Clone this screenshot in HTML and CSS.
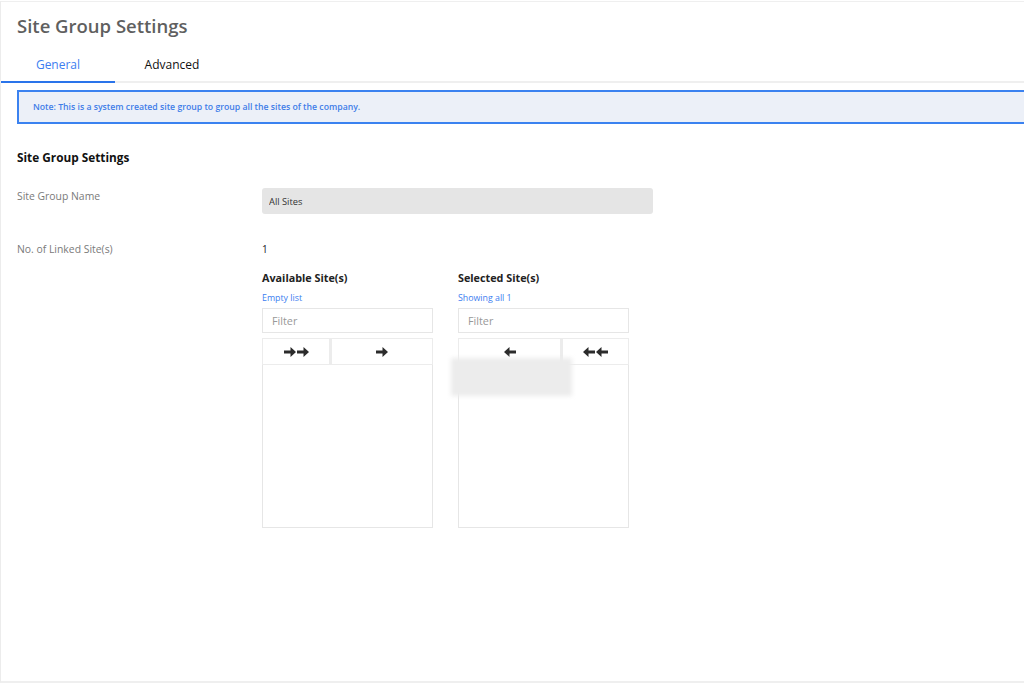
FILE: index.html
```html
<!DOCTYPE html>
<html lang="en">
<head>
    <meta charset="UTF-8">
    <meta name="viewport" content="width=device-width, initial-scale=1.0">
    <title>Site Group Settings</title>
    <link rel="stylesheet" href="styles.css">
</head>
<body>
    <div class="page">
        <h1 class="page-title">Site Group Settings</h1>
        <div class="tabs">
            <div class="tab tab-active">General</div>
            <div class="tab">Advanced</div>
        </div>
        <div class="note">Note: This is a system created site group to group all the sites of the company.</div>

        <h2 class="section-title">Site Group Settings</h2>
        <div class="form-row form-row-name">
            <label class="form-label" for="groupName">Site Group Name</label>
            <input class="form-control" type="text" id="groupName" value="All Sites" readonly>
        </div>
        <div class="form-row form-row-count">
            <span class="form-label">No. of Linked Site(s)</span>
            <div class="form-value">
                <div class="count">1</div>
                <div class="dual-list">
                    <div class="list-col">
                        <div class="list-title">Available Site(s)</div>
                        <div class="list-info">Empty list</div>
                        <input class="filter" type="text" placeholder="Filter">
                        <div class="btn-group">
                            <button class="btn btn-narrow" type="button">
                                <svg width="12" height="10" viewBox="0 0 12 10"><path d="M0 3.5h6.5V0L12 5l-5.5 5V6.5H0z"/></svg>
                                <svg width="12" height="10" viewBox="0 0 12 10"><path d="M0 3.5h6.5V0L12 5l-5.5 5V6.5H0z"/></svg>
                            </button>
                            <button class="btn btn-wide" type="button">
                                <svg width="12" height="10" viewBox="0 0 12 10"><path d="M0 3.5h6.5V0L12 5l-5.5 5V6.5H0z"/></svg>
                            </button>
                        </div>
                        <div class="list-box"></div>
                    </div>
                    <div class="list-col">
                        <div class="list-title">Selected Site(s)</div>
                        <div class="list-info">Showing all 1</div>
                        <input class="filter" type="text" placeholder="Filter">
                        <div class="btn-group">
                            <button class="btn btn-wide" type="button">
                                <svg width="12" height="10" viewBox="0 0 12 10"><path d="M12 3.5H5.5V0L0 5l5.5 5V6.5H12z"/></svg>
                            </button>
                            <button class="btn btn-narrow" type="button">
                                <svg width="12" height="10" viewBox="0 0 12 10"><path d="M12 3.5H5.5V0L0 5l5.5 5V6.5H12z"/></svg>
                                <svg width="12" height="10" viewBox="0 0 12 10"><path d="M12 3.5H5.5V0L0 5l5.5 5V6.5H12z"/></svg>
                            </button>
                        </div>
                        <div class="list-box">
                            <div class="blurred"></div>
                        </div>
                    </div>
                </div>
            </div>
        </div>
    </div>
</body>
</html>
```

FILE: styles.css
```css
html, body {
    margin: 0;
    overflow: hidden;
    background: #fff;
    font-family: "Open Sans", "Noto Sans", sans-serif;
}
.page {
    box-sizing: border-box;
    height: 682px;
    margin-top: 1px;
    border-top: 1px solid #efefef;
    border-left: 1px solid #ececec;
    border-bottom: 2px solid #efefef;
}
.page-title {
    margin: 0;
    padding: 11px 16px 0;
    font-size: 18.5px;
    line-height: 26px;
    font-weight: 600;
    color: #5f5f5f;
}
.tabs {
    display: flex;
    margin-top: 11px;
    border-bottom: 2px solid #efefef;
}
.tab {
    width: 114px;
    text-align: center;
    font-size: 12px;
    line-height: 18px;
    padding: 6px 0 7px;
    color: #111;
}
.tab-active {
    color: #3d7ef0;
    border-bottom: 2px solid #2a74ea;
    margin-bottom: -2px;
}
.note {
    margin: 7px -10px 0 16px;
    padding: 0 14px;
    height: 30px;
    line-height: 30px;
    border: 2px solid #3b82f0;
    background: #ecf0f8;
    color: #3f7de8;
    font-size: 8.7px;
    font-weight: 600;
}
.section-title {
    margin: 24px 0 0 16px;
    font-size: 11.8px;
    line-height: 18px;
    font-weight: 700;
    color: #111;
}
.form-row {
    display: flex;
    padding-left: 16px;
}
.form-label {
    width: 245px;
    flex: none;
    font-size: 10.4px;
    color: #7a7a7a;
}
.form-row-name {
    margin-top: 22px;
}
.form-row-name .form-label {
    padding-top: 1px;
}
.form-control {
    box-sizing: border-box;
    width: 391px;
    height: 26px;
    padding: 0 7px;
    border: none;
    border-radius: 3px;
    background: #e5e5e5;
    font-family: inherit;
    font-size: 9.3px;
    color: #333;
    outline: none;
}
.form-row-count {
    margin-top: 28px;
}
.form-row-count .form-label {
    line-height: 14px;
}
.count {
    font-size: 10px;
    line-height: 14px;
    color: #222;
}
.dual-list {
    display: flex;
    gap: 25px;
    margin-top: 15px;
}
.list-col {
    width: 171px;
    position: relative;
}
.list-title {
    font-size: 10.8px;
    line-height: 14px;
    font-weight: 700;
    color: #222;
}
.list-info {
    margin-top: 8px;
    font-size: 8.8px;
    line-height: 11px;
    color: #3d7ef0;
}
.filter {
    display: block;
    box-sizing: border-box;
    width: 171px;
    height: 25px;
    margin-top: 4px;
    padding: 0 9px;
    border: 1px solid #e6e6e6;
    font-family: inherit;
    font-size: 10.8px;
    color: #333;
    outline: none;
}
.filter::placeholder {
    color: #999;
}
.btn-group {
    display: flex;
    margin-top: 5px;
    height: 27px;
}
.btn {
    box-sizing: border-box;
    height: 27px;
    padding: 0;
    display: flex;
    align-items: center;
    justify-content: center;
    gap: 1px;
    background: #fff;
    border: 1px solid #ececec;
    fill: #2b2b2b;
}
.btn + .btn {
    border-left: 2px solid #ececec;
}
.btn-narrow {
    width: 68px;
}
.btn-wide {
    width: 103px;
}
.list-box {
    box-sizing: border-box;
    height: 163px;
    border: 1px solid #e6e6e6;
    border-top: none;
    position: relative;
}
.blurred {
    position: absolute;
    left: -8px;
    top: -7px;
    width: 121px;
    height: 38px;
    background: #ececec;
    filter: blur(2px);
}
```
